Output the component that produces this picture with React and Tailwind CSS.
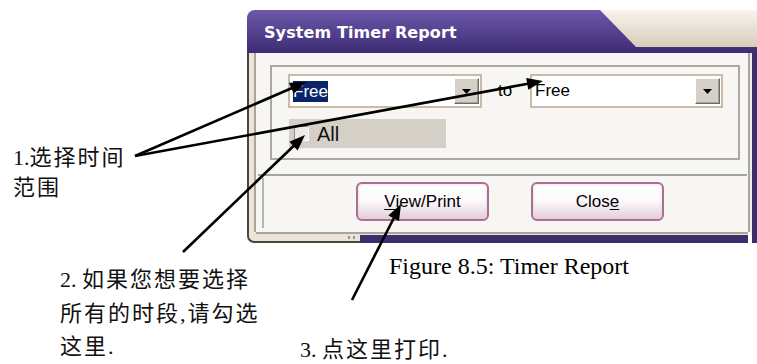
const arrows = [
  [135, 156, 306, 82],
  [135, 156, 543, 81],
  [183, 252, 305, 135],
  [352, 300, 401, 204],
]

function Arrow({ x1, y1, x2, y2 }) {
  const len = Math.hypot(x2 - x1, y2 - y1)
  const ux = (x2 - x1) / len
  const uy = (y2 - y1) / len
  const bx = x2 - ux * 16
  const by = y2 - uy * 16
  const pts = `${x2},${y2} ${bx - uy * 6},${by + ux * 6} ${bx + uy * 6},${by - ux * 6}`
  return (
    <g>
      <line x1={x1} y1={y1} x2={bx + ux * 2} y2={by + uy * 2} stroke="#000" strokeWidth={2.6} />
      <polygon points={pts} fill="#000" />
    </g>
  )
}

function DropButton() {
  return (
    <div className="ml-auto mr-[1px] w-[25px] h-[26px] bg-[#d4d0c8] border border-t-white border-l-white border-r-[#6a6a6a] border-b-[#6a6a6a] shadow-[inset_-1px_-1px_0_#a5a29b] flex items-center justify-center">
      <svg width="9" height="5" viewBox="0 0 9 5">
        <path d="M0 0h9L4.5 5z" fill="#000" />
      </svg>
    </div>
  )
}

function WinButton({ children }) {
  return (
    <div className="w-[133px] h-[39px] rounded-[6px] border-2 border-[#a87092] bg-linear-to-b from-white via-[#fbf8fa] to-[#e4ccd9] shadow-[inset_0_0_3px_#e6d0dc] flex items-center justify-center text-[17px] text-black">
      {children}
    </div>
  )
}

export default function App() {
  return (
    <div className="relative w-[757px] h-[364px] overflow-hidden bg-white pt-[10px] font-['Liberation_Sans',Arial,sans-serif]">
      {/* window */}
      <div className="ml-[247px] w-[510px]">
        <div className="h-[43px] rounded-tl-[8px] overflow-hidden bg-linear-to-b from-[#f7f4ee] to-[#d5c7b1]">
          <div className="h-full bg-linear-to-b from-[#6d58ab] to-[#3d2c74] [clip-path:polygon(0_0,353px_0,389px_37px,100%_37px,100%_100%,0_100%)] pl-[17px] pt-[15px]">
            <div className="font-['DejaVu_Sans',sans-serif] font-bold text-[16px] leading-[16px] tracking-[0.1px] text-white">
              System Timer Report
            </div>
          </div>
        </div>

        <div className="flex">
          <div className="w-[9px] h-[190px] rounded-bl-[7px] border-l-2 border-b-2 border-[#4b453c] bg-[#ebe5d8]">
            <div className="ml-[5px] w-[2px] h-[179px] bg-[#aaa59b]" />
          </div>

          <div className="w-[492px] flex flex-col">
            <div className="h-[179px] bg-[#f7f6f2] flex flex-col">
              <div className="ml-[14px] mt-[12px] w-[470px] h-[95px] border-2 border-[#a9a8a3] pl-[16px] pt-[7px]">
                <div className="flex items-center">
                  <div className="w-[194px] h-[34px] border-2 border-[#c9bba7] bg-white flex items-center">
                    <span className="ml-[3px] h-[21px] leading-[21px] bg-[#0a246a] text-white text-[17px]">Free</span>
                    <DropButton />
                  </div>
                  <div className="w-[48px] pl-[16px] text-[17px]">to</div>
                  <div className="w-[193px] h-[34px] border-2 border-[#c9bba7] bg-white flex items-center">
                    <span className="ml-[3px] text-[17px]">Free</span>
                    <DropButton />
                  </div>
                </div>
                <div className="mt-[11px] ml-[1px] w-[157px] h-[29px] bg-[#d4d0c8] flex items-center pl-[5px]">
                  <div className="w-[15px] h-[15px] border border-[#8c8a85] border-r-white border-b-white bg-[#ecebe6]" />
                  <span className="ml-[8px] text-[20px] leading-[20px] text-[#111]">All</span>
                </div>
              </div>

              <div className="mt-[14px] ml-[2px] mr-[1px] flex-1 border-t-2 border-[#a4a4a4] flex">
                <div className="ml-[4px] mt-[2px] w-[2px] h-[50px] bg-[#b5b5b5]" />
                <div className="ml-[92px] mt-[6px] flex gap-[42px]">
                  <WinButton>
                    <span className="underline underline-offset-2">V</span>iew/Print
                  </WinButton>
                  <WinButton>
                    Clos<span className="underline underline-offset-2">e</span>
                  </WinButton>
                </div>
              </div>
            </div>

            <div className="h-[11px] flex flex-col">
              <div className="h-[2px] bg-[#aaa59b]" />
              <div className="flex flex-1">
                <div className="w-[104px] bg-[#ebe5d8] border-b-2 border-[#4b453c] flex items-center justify-end pr-[5px] gap-[3px]">
                  <span className="w-[2px] h-[3px] bg-[#8e8fb4]" />
                  <span className="w-[2px] h-[3px] bg-[#8e8fb4]" />
                </div>
                <div className="flex-1 flex flex-col">
                  <div className="h-[1px] bg-[#ebe5d8]" />
                  <div className="flex-1 bg-[#3c2e6c]" />
                </div>
              </div>
            </div>
          </div>

          <div className="w-[9px] h-[190px] flex">
            <div className="w-[2px] h-[179px] bg-[#a8a8a8]" />
            <div className="w-[2px] h-[182px] bg-[#efece6]" />
            <div className="flex-1 bg-[#3c2e6c]" />
          </div>
        </div>
      </div>

      {/* caption */}
      <div className="ml-[389px] mt-[9px] font-['Liberation_Serif','Times_New_Roman',serif] text-[24px] leading-[28px] text-black">
        Figure 8.5: Timer Report
      </div>

      {/* annotations */}
      <div className="absolute left-[13px] top-[143px] font-['Liberation_Serif','Noto_Sans_CJK_SC',serif] text-[22px] leading-[30px] text-[#111]">
        1.<span className="tracking-[2px]">选择时间</span>
        <br />
        <span className="tracking-[2px]">范围</span>
      </div>
      <div className="absolute left-[60px] top-[263px] font-['Liberation_Serif','Noto_Sans_CJK_SC',serif] text-[22px] leading-[33.5px] text-[#111]">
        2. <span className="tracking-[2px]">如果您想要选择</span>
        <br />
        <span className="tracking-[2px]">所有的时段,请勾选</span>
        <br />
        <span className="tracking-[2px]">这里.</span>
      </div>
      <div className="absolute left-[300px] top-[335px] font-['Liberation_Serif','Noto_Sans_CJK_SC',serif] text-[22px] leading-[30px] text-[#111]">
        3. <span className="tracking-[2px]">点这里打印.</span>
      </div>

      <svg className="absolute inset-0 pointer-events-none" width="757" height="364">
        {arrows.map(([x1, y1, x2, y2], i) => (
          <Arrow key={i} x1={x1} y1={y1} x2={x2} y2={y2} />
        ))}
      </svg>
    </div>
  )
}
